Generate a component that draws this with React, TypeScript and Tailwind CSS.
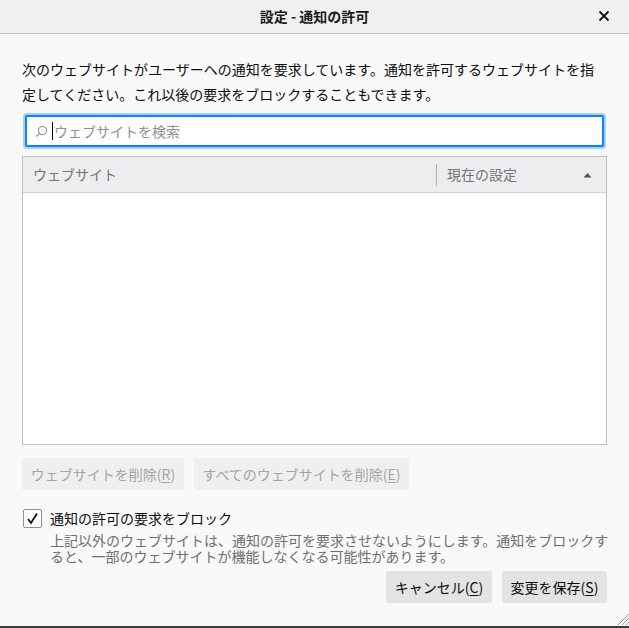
import { useState } from 'react';

const font = { fontFamily: '"Noto Sans CJK JP", "Noto Sans", sans-serif' };

function Key({ k }: { k: string }) {
  return <span className="underline underline-offset-2">{k}</span>;
}

export default function App() {
  const [blocked, setBlocked] = useState(true);

  return (
    <div
      className="relative flex h-[628px] w-[629px] flex-col overflow-hidden bg-[#f9f9f9] text-[14px] text-[#0c0c0d]"
      style={font}
    >
      {/* title bar */}
      <div className="relative flex h-[34px] shrink-0 items-center justify-center border-b border-[#c4c4c4] bg-[#f0f0f0]">
        <span className="text-[14px] font-bold text-[#1a1a1a]">設定 - 通知の許可</span>
        <button className="absolute right-[17px] top-[8px] flex h-[16px] w-[16px] items-center justify-center">
          <svg width="12" height="12" viewBox="0 0 12 12">
            <path d="M1.5 1.5 L10.5 10.5 M10.5 1.5 L1.5 10.5" stroke="#111" strokeWidth="1.8" />
          </svg>
        </button>
      </div>

      <div className="flex flex-1 flex-col px-[22px]">
        <p className="mt-[23px] leading-[25px]">
          <span className="block whitespace-nowrap">
            次のウェブサイトがユーザーへの通知を要求しています。通知を許可するウェブサイトを指
          </span>
          <span className="block whitespace-nowrap">
            定してください。これ以後の要求をブロックすることもできます。
          </span>
        </p>

        {/* search */}
        <div className="mx-[3px] mt-[8px] flex h-[32px] items-center rounded-[2px] border-2 border-[#0a84ff] bg-white shadow-[0_0_0_2px_rgba(10,132,255,0.35)]">
          <svg className="ml-[8px] mr-[4px]" width="13" height="13" viewBox="0 0 13 13">
            <circle cx="7.5" cy="5.5" r="4" fill="none" stroke="#8a8a8a" strokeWidth="1.1" />
            <path d="M4.6 8.4 L1.5 11.5" stroke="#8a8a8a" strokeWidth="1.2" />
          </svg>
          <div className="flex items-center">
            <span className="h-[18px] w-px bg-black" />
            <span className="ml-px text-[#8f8f8f]">ウェブサイトを検索</span>
          </div>
        </div>

        {/* table */}
        <div className="mt-[9px] flex h-[289px] flex-col border border-[#c1c1c1] bg-white">
          <div className="flex h-[36px] shrink-0 items-center border-b border-[#d0d0d0] bg-[#ededf0] text-[#737373]">
            <div className="flex-1 pl-[10px]">ウェブサイト</div>
            <div className="h-[22px] w-px bg-[#b1b1b3]" />
            <div className="flex w-[169px] items-center justify-between pl-[10px] pr-[14px]">
              <span>現在の設定</span>
              <svg width="9" height="6" viewBox="0 0 9 6">
                <path d="M0.5 5.5 L4.5 1 L8.5 5.5 Z" fill="#555" />
              </svg>
            </div>
          </div>
          <div className="flex-1" />
        </div>

        {/* remove buttons */}
        <div className="mt-[13px] flex gap-[10px]">
          <button className="h-[32px] w-[162px] rounded-[2px] bg-[#efefef] text-[#a4a4a4]">
            ウェブサイトを削除(<Key k="R" />)
          </button>
          <button className="h-[32px] w-[215px] rounded-[2px] bg-[#efefef] text-[#a4a4a4]">
            すべてのウェブサイトを削除(<Key k="E" />)
          </button>
        </div>

        {/* checkbox */}
        <div className="mt-[18px] flex items-center">
          <button
            onClick={() => setBlocked(!blocked)}
            className="ml-px flex h-[19px] w-[19px] items-center justify-center rounded-[2px] border border-[#8f8f9d] bg-white"
          >
            {blocked && (
              <svg width="13" height="13" viewBox="0 0 13 13">
                <path d="M2 7 L5 11 L11 1.5" fill="none" stroke="#111" strokeWidth="1.8" />
              </svg>
            )}
          </button>
          <span className="ml-[8px]">通知の許可の要求をブロック</span>
        </div>
        <div className="ml-[28px] mt-[3px] leading-[16px] text-[#6f6f6f]">
          <span className="block whitespace-nowrap">
            上記以外のウェブサイトは、通知の許可を要求させないようにします。通知をブロックす
          </span>
          <span className="block whitespace-nowrap">
            ると、一部のウェブサイトが機能しなくなる可能性があります。
          </span>
        </div>

        {/* footer */}
        <div className="mt-[7px] flex justify-end gap-[10px]">
          <button className="h-[32px] w-[106px] rounded-[2px] bg-[#e3e3e3] text-[#0c0c0d]">
            キャンセル(<Key k="C" />)
          </button>
          <button className="h-[32px] w-[105px] rounded-[2px] bg-[#e3e3e3] text-[#0c0c0d]">
            変更を保存(<Key k="S" />)
          </button>
        </div>
      </div>

      {/* resize grip */}
      <svg className="absolute bottom-[3px] right-0" width="14" height="14" viewBox="0 0 14 14">
        <path d="M14 3 L3 14 M14 7 L7 14 M14 11 L11 14" stroke="#9a9a9a" strokeWidth="1" />
      </svg>
      <div className="h-[2px] shrink-0 bg-[#3c3c3c]" />
    </div>
  );
}
